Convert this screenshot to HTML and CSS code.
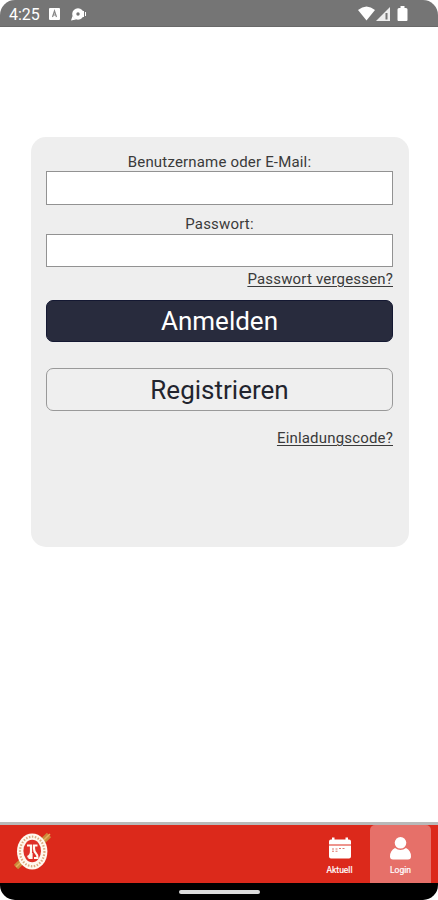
FILE: index.html
```html
<!DOCTYPE html>
<html lang="de">
<head>
<meta charset="utf-8">
<title>Login</title>
<link rel="stylesheet" href="styles.css">
</head>
<body>
<div class="screen">
  <header class="status">
    <span class="time">4:25</span>
    <svg class="keyboard" width="11" height="12" viewBox="0 0 11 12"><rect width="11" height="12" rx="1" fill="#fff"/><path d="M3.500 9 5.500 3 7.500 9M4 7h3" fill="none" stroke="#888" stroke-width="1.2"/></svg>
    <svg class="debug" width="16" height="13" viewBox="0 0 16 13"><circle cx="7" cy="6" r="5.8" fill="#fff"/><path d="M0 12.500 1.500 8 5 11.500zM10 3h3v6h-3zM14 4h1v4h-1z" fill="#fff"/><circle cx="7" cy="6" r="1.700" fill="#757575"/></svg>
    <svg class="signals" width="50" height="16" viewBox="0 0 50 16"><path d="M0 4Q8.500-3 17 4L8.500 14.500z" fill="#fff"/><path d="M18 15 32 1V15z" fill="#eee"/><path d="M28.500 7v6.500" stroke="#777" stroke-width="2"/><path d="M41 2h1.500V0h4v2H48q1.500 0 1.500 1.500V14q0 1-1 1h-8q-1 0-1-1V3.500Q39.500 2 41 2z" fill="#fff"/></svg>
  </header>
  <main class="content">
    <form class="card">
      <label class="label" for="user">Benutzername oder E-Mail:</label>
      <input class="field" id="user" type="text">
      <label class="label label-password" for="password">Passwort:</label>
      <input class="field" id="password" type="password">
      <a class="link forgot">Passwort vergessen?</a>
      <button class="button primary" type="button">Anmelden</button>
      <button class="button secondary" type="button">Registrieren</button>
      <a class="link invite">Einladungscode?</a>
    </form>
  </main>
  <nav class="nav">
    <svg class="logo" width="38" height="40" viewBox="0 0 38 40">
      <path d="M2 35 35 3" stroke="#c98a3b" stroke-width="6"/>
      <path d="M2 35 36 2" stroke="#e8ae5c" stroke-width="1.500"/>
      <ellipse cx="18.200" cy="19.500" rx="15.200" ry="18" fill="#fff8ef"/>
      <ellipse cx="18.200" cy="19.500" rx="12.200" ry="14.800" fill="none" stroke="#dcab80" stroke-width="2.200" stroke-dasharray="1.500 1.500"/>
      <ellipse cx="18.200" cy="19" rx="8.800" ry="11.200" fill="#df3028"/>
      <path d="M13 13.500h4v6q0 4-3.500 5.500M23.500 13.500h-3.500v3q0 3 2 5t1.500 4.500h-3.500M17.500 21v5h-3" fill="none" stroke="#fffaf2" stroke-width="2.200"/>
    </svg>
    <a class="tab current">
      <svg width="22" height="22" viewBox="0 0 22 22"><path d="M2 2h1V0h2.500v2h11V0H19v2h1q2 0 2 2v3H0V4q0-2 2-2zM0 8h22v11q0 2-2 2H2q-2 0-2-2z" fill="#fff"/><path d="M3 11.500h2M6.500 11.500h2M10 11h2M13.500 11h2M3 13.700h2M6.500 13.700h2" stroke="#df776d" stroke-width="1.100"/></svg>
      <span>Aktuell</span>
    </a>
    <a class="tab active">
      <svg width="22" height="23" viewBox="0 0 22 23"><circle cx="10.500" cy="5.800" r="5.800" fill="#fff"/><path d="M5 11q5.500 4 11 0 5 2.500 5 8.500 0 3-3 3H3q-3 0-3-3Q0 13.500 5 11z" fill="#fff"/></svg>
      <span>Login</span>
    </a>
  </nav>
  <footer class="gesture"><div class="pill"></div></footer>
</div>
</body>
</html>
```

FILE: styles.css
```css
* { box-sizing: border-box; }
html { background: #fff; }
body { margin: 0; font-family: Roboto, sans-serif; color: #3a3a3a; }
.screen { width: 438px; height: 900px; display: flex; flex-direction: column; overflow: hidden; border-radius: 15px; background: #fff; }
.status { height: 27px; flex: none; display: flex; align-items: center; padding: 0 30px 0 9px; background: #757575; border-bottom: 1px solid #696969; color: #fff; }
.time { width: 40px; font-size: 16px; line-height: 27px; padding-top: 2px; }
.debug { margin: 2px 0 0 11px; }
.keyboard { margin-top: 2px; }
.signals { margin: 2px 0 0 auto; }
.content { flex: 1; padding: 110px 29.500px 0 31px; }
.card { height: 410px; padding: 15px 15.500px 0 15px; display: flex; flex-direction: column; border-radius: 15px; background: #eee; }
.label { height: 19px; line-height: 20px; text-align: center; font-size: 15px; letter-spacing: .18px; }
.label-password { margin-top: 10px; line-height: 19px; }
.field { width: 100%; height: 33.500px; flex: none; border: 1px solid #929292; border-radius: 0; padding: 4px 8px; background: #fff; outline: 0; }
.link { align-self: flex-end; height: 20px; line-height: 21px; font-size: 15px; text-decoration: underline; text-underline-offset: 2px; text-decoration-thickness: 1px; letter-spacing: .18px; }
.forgot { margin-top: 2px; }
.button { flex: none; width: 100%; height: 42px; border-radius: 7px; padding: 0; font: 26px/40px Roboto, sans-serif; }
.primary { margin-top: 11px; border: 1px solid #141832; background: #282b3d; color: #fff; }
.secondary { height: 43px; margin-top: 26px; border: 1px solid #999; background: #efefef; color: #22242e; }
.invite { margin-top: 17px; }
.nav { height: 61px; flex: none; display: flex; border-top: 3px solid #b9b9b9; background: #dc291b; }
.logo { margin: 7px 0 0 14px; }
.tab { width: 61px; height: 58px; display: flex; flex-direction: column; align-items: center; padding-top: 12px; color: #fff; font-size: 8.500px; line-height: 11px; }
.tab svg { height: 23px; flex: none; }
.tab span { margin-top: 5px; -webkit-text-stroke: .2px #fff; }
.current { margin-left: auto; }
.active { margin-right: 7px; background: #e67069; border-radius: 5px 5px 0 0; }
.gesture { height: 17px; flex: none; display: flex; justify-content: center; padding-top: 7px; background: #000; }
.pill { width: 81px; height: 4px; border-radius: 2px; background: #ddd; }
```
